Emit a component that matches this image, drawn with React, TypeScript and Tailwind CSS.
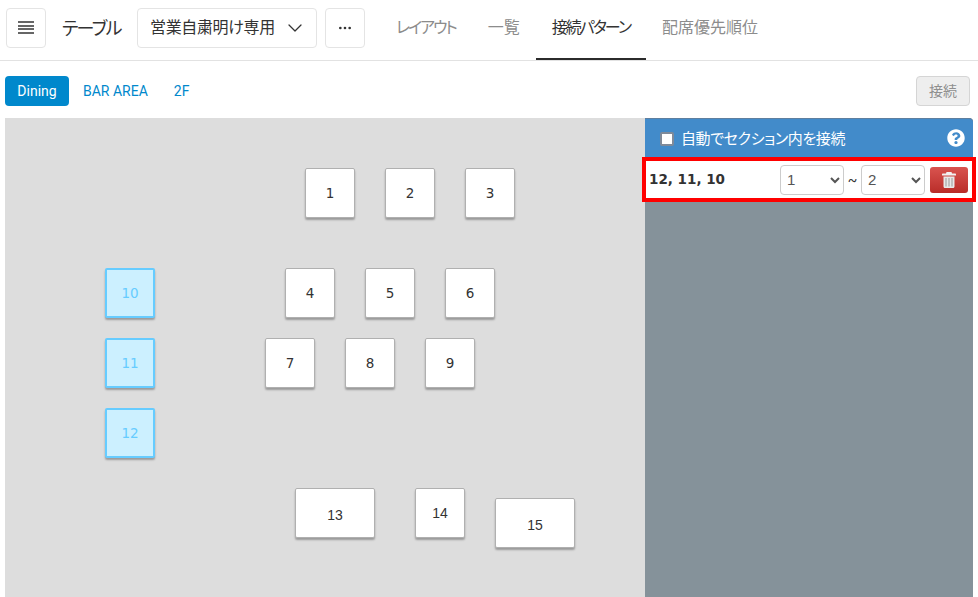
import React from 'react';
import { ChevronDown, Ellipsis } from 'lucide-react';
import { FaQuestionCircle } from 'react-icons/fa';

const font = "font-['Roboto','Noto_Sans_CJK_JP',sans-serif]";

const tabs = [
  { label: 'レイアウト', active: false, kana: true },
  { label: '一覧', active: false, kana: false },
  { label: '接続パターン', active: true, kana: true },
  { label: '配席優先順位', active: false, kana: false },
];

const tables = [
  { id: 1, x: 300, y: 50, w: 50 },
  { id: 2, x: 380, y: 50, w: 50 },
  { id: 3, x: 460, y: 50, w: 50 },
  { id: 4, x: 280, y: 150, w: 50 },
  { id: 5, x: 360, y: 150, w: 50 },
  { id: 6, x: 440, y: 150, w: 50 },
  { id: 7, x: 260, y: 220, w: 50 },
  { id: 8, x: 340, y: 220, w: 50 },
  { id: 9, x: 420, y: 220, w: 50 },
  { id: 10, x: 100, y: 150, w: 50, selected: true },
  { id: 11, x: 100, y: 220, w: 50, selected: true },
  { id: 12, x: 100, y: 290, w: 50, selected: true },
  { id: 13, x: 290, y: 370, w: 80, plain: true, low: true },
  { id: 14, x: 410, y: 370, w: 50, plain: true },
  { id: 15, x: 490, y: 380, w: 80, plain: true, low: true },
];

const Trash = () => (
  <svg width="14" height="16" viewBox="0 0 14 16">
    <path fill="#f2f2f2" d="M4.500 0h5l.5 1.500h3c.6 0 1 .4 1 1V3.500H0V2.500c0-.6.400-1 1-1h3z" />
    <path fill="#e8e8e8" d="M1.500 4.500h11V14.500c0 .8-.6 1.500-1.400 1.500H2.900c-.8 0-1.400-.7-1.400-1.500z" />
    <path fill="#9a9a9a" d="M3.500 6h1v8.500h-1zM6.500 6h1v8.500h-1zM9.500 6h1v8.500h-1z" />
  </svg>
);

const RangeSelect = ({ value }: { value: string }) => (
  <select
    defaultValue={value}
    className="h-[30px] w-16 rounded border border-[#ccc] bg-white pl-[2px] font-['Liberation_Sans',sans-serif] text-[15px] text-[#555]"
  >
    <option>1</option>
    <option>2</option>
    <option>3</option>
  </select>
);

export default function App() {
  return (
    <div className={`${font} flex h-[597px] w-full flex-col overflow-hidden bg-white text-[#333] [font-feature-settings:'palt']`}>
      {/* Top bar */}
      <header className="flex h-[61px] shrink-0 items-center border-b border-[#e2e2e2] pl-[6px]">
        <button className="mb-[5px] flex h-10 w-10 flex-col items-center justify-center gap-[1.5px] rounded border border-[#e4e4e4]">
          <span className="h-[2px] w-4 bg-[#666]" />
          <span className="h-[2px] w-4 bg-[#666]" />
          <span className="h-[2px] w-4 bg-[#666]" />
          <span className="h-[2px] w-4 bg-[#666]" />
        </button>
        <h1 className="mb-[3px] ml-4 w-[75px] text-lg font-normal tracking-[-1.75px]">テーブル</h1>
        <button className="mb-[5px] flex h-10 w-[180px] items-center justify-between rounded border border-[#e4e4e4] pl-3 pr-[9px] text-base tracking-[-0.35px]">
          営業自粛明け専用
          <ChevronDown size={24} strokeWidth={1.25} />
        </button>
        <button className="mb-[5px] ml-2 flex h-10 w-10 items-center justify-center rounded border border-[#e4e4e4]">
          <Ellipsis size={16} strokeWidth={2} />
        </button>
        <nav className="ml-[15px] flex h-full">
          {tabs.map(tab => (
            <div
              key={tab.label}
              className={`flex h-[60px] items-center border-b-2 px-4 pb-[3px] text-base ${tab.kana ? 'tracking-[-2px]' : ''} ${
                tab.active ? 'border-[#2b2b2b] text-[#333]' : 'border-transparent text-[#8c8c8c]'
              }`}
            >
              {tab.label}
            </div>
          ))}
        </nav>
      </header>

      {/* Section tabs */}
      <div className="flex h-[57px] shrink-0 items-start justify-between pl-[5px] pr-2 pt-[15px] text-sm">
        <div className="flex items-center">
          <span className="flex h-[30px] w-16 items-center justify-center rounded bg-[#0088cc] text-white">Dining</span>
          <span className="ml-[14px] text-[#0088cc]">BAR AREA</span>
          <span className="ml-[26px] text-[#0088cc]">2F</span>
        </div>
        <button className="h-[30px] w-[54px] rounded border border-[#d5d5d5] bg-[#eee] text-[#8f8f8f]">接続</button>
      </div>

      {/* Main */}
      <div className="ml-[5px] mr-[5px] flex min-h-0 flex-1">
        <div className="relative w-[640px] bg-[#dddddd]">
          {tables.map(t => (
            <div
              key={t.id}
              className={`absolute flex h-[50px] items-center justify-center rounded-[2px] shadow-[0_2px_2px_rgba(0,0,0,0.3)] ${
                t.selected
                  ? 'border-2 border-[#66ccff] bg-[#ccf0ff] text-[#66ccff]'
                  : 'border border-[#b0b0b0] bg-white text-[#333]'
              } ${
                t.plain
                  ? "font-['Liberation_Sans',sans-serif] text-sm"
                  : "font-['DejaVu_Sans',sans-serif] text-[13.5px]"
              } ${t.low ? 'pt-1' : ''}`}
              style={{ left: t.x, top: t.y, width: t.w }}
            >
              {t.id}
            </div>
          ))}
        </div>
        <aside className="flex w-[328px] flex-col rounded-tr bg-[#85929a]">
          <div className="flex h-[39px] shrink-0 items-center justify-between rounded-tr border-t border-[#5f7f9f] bg-[#428bca] pl-[15px] pr-2 text-white">
            <label className="flex items-center gap-[7px] pt-[2px] text-[15px] tracking-[-0.4px]">
              <span className="h-[14px] w-[14px] rounded-[2px] border-2 border-[#7f8a99] bg-white" />
              自動でセクション内を接続
            </label>
            <FaQuestionCircle size={18} />
          </div>
          <div className="relative z-10 -mx-[3px] flex h-[45px] shrink-0 items-center border-4 border-[#ff0000] bg-white pl-[3px] pr-[1px]">
            <span className="w-[131px] font-['DejaVu_Sans',sans-serif] text-[13.5px] font-bold text-[#333]">12, 11, 10</span>
            <RangeSelect value="1" />
            <span className="w-[17px] text-center text-sm">~</span>
            <RangeSelect value="2" />
            <button className="ml-[5px] flex h-[26px] w-[38px] items-center justify-center rounded-[3px] bg-gradient-to-b from-[#d9534f] to-[#b92c28]">
              <Trash />
            </button>
          </div>
        </aside>
      </div>
    </div>
  );
}
